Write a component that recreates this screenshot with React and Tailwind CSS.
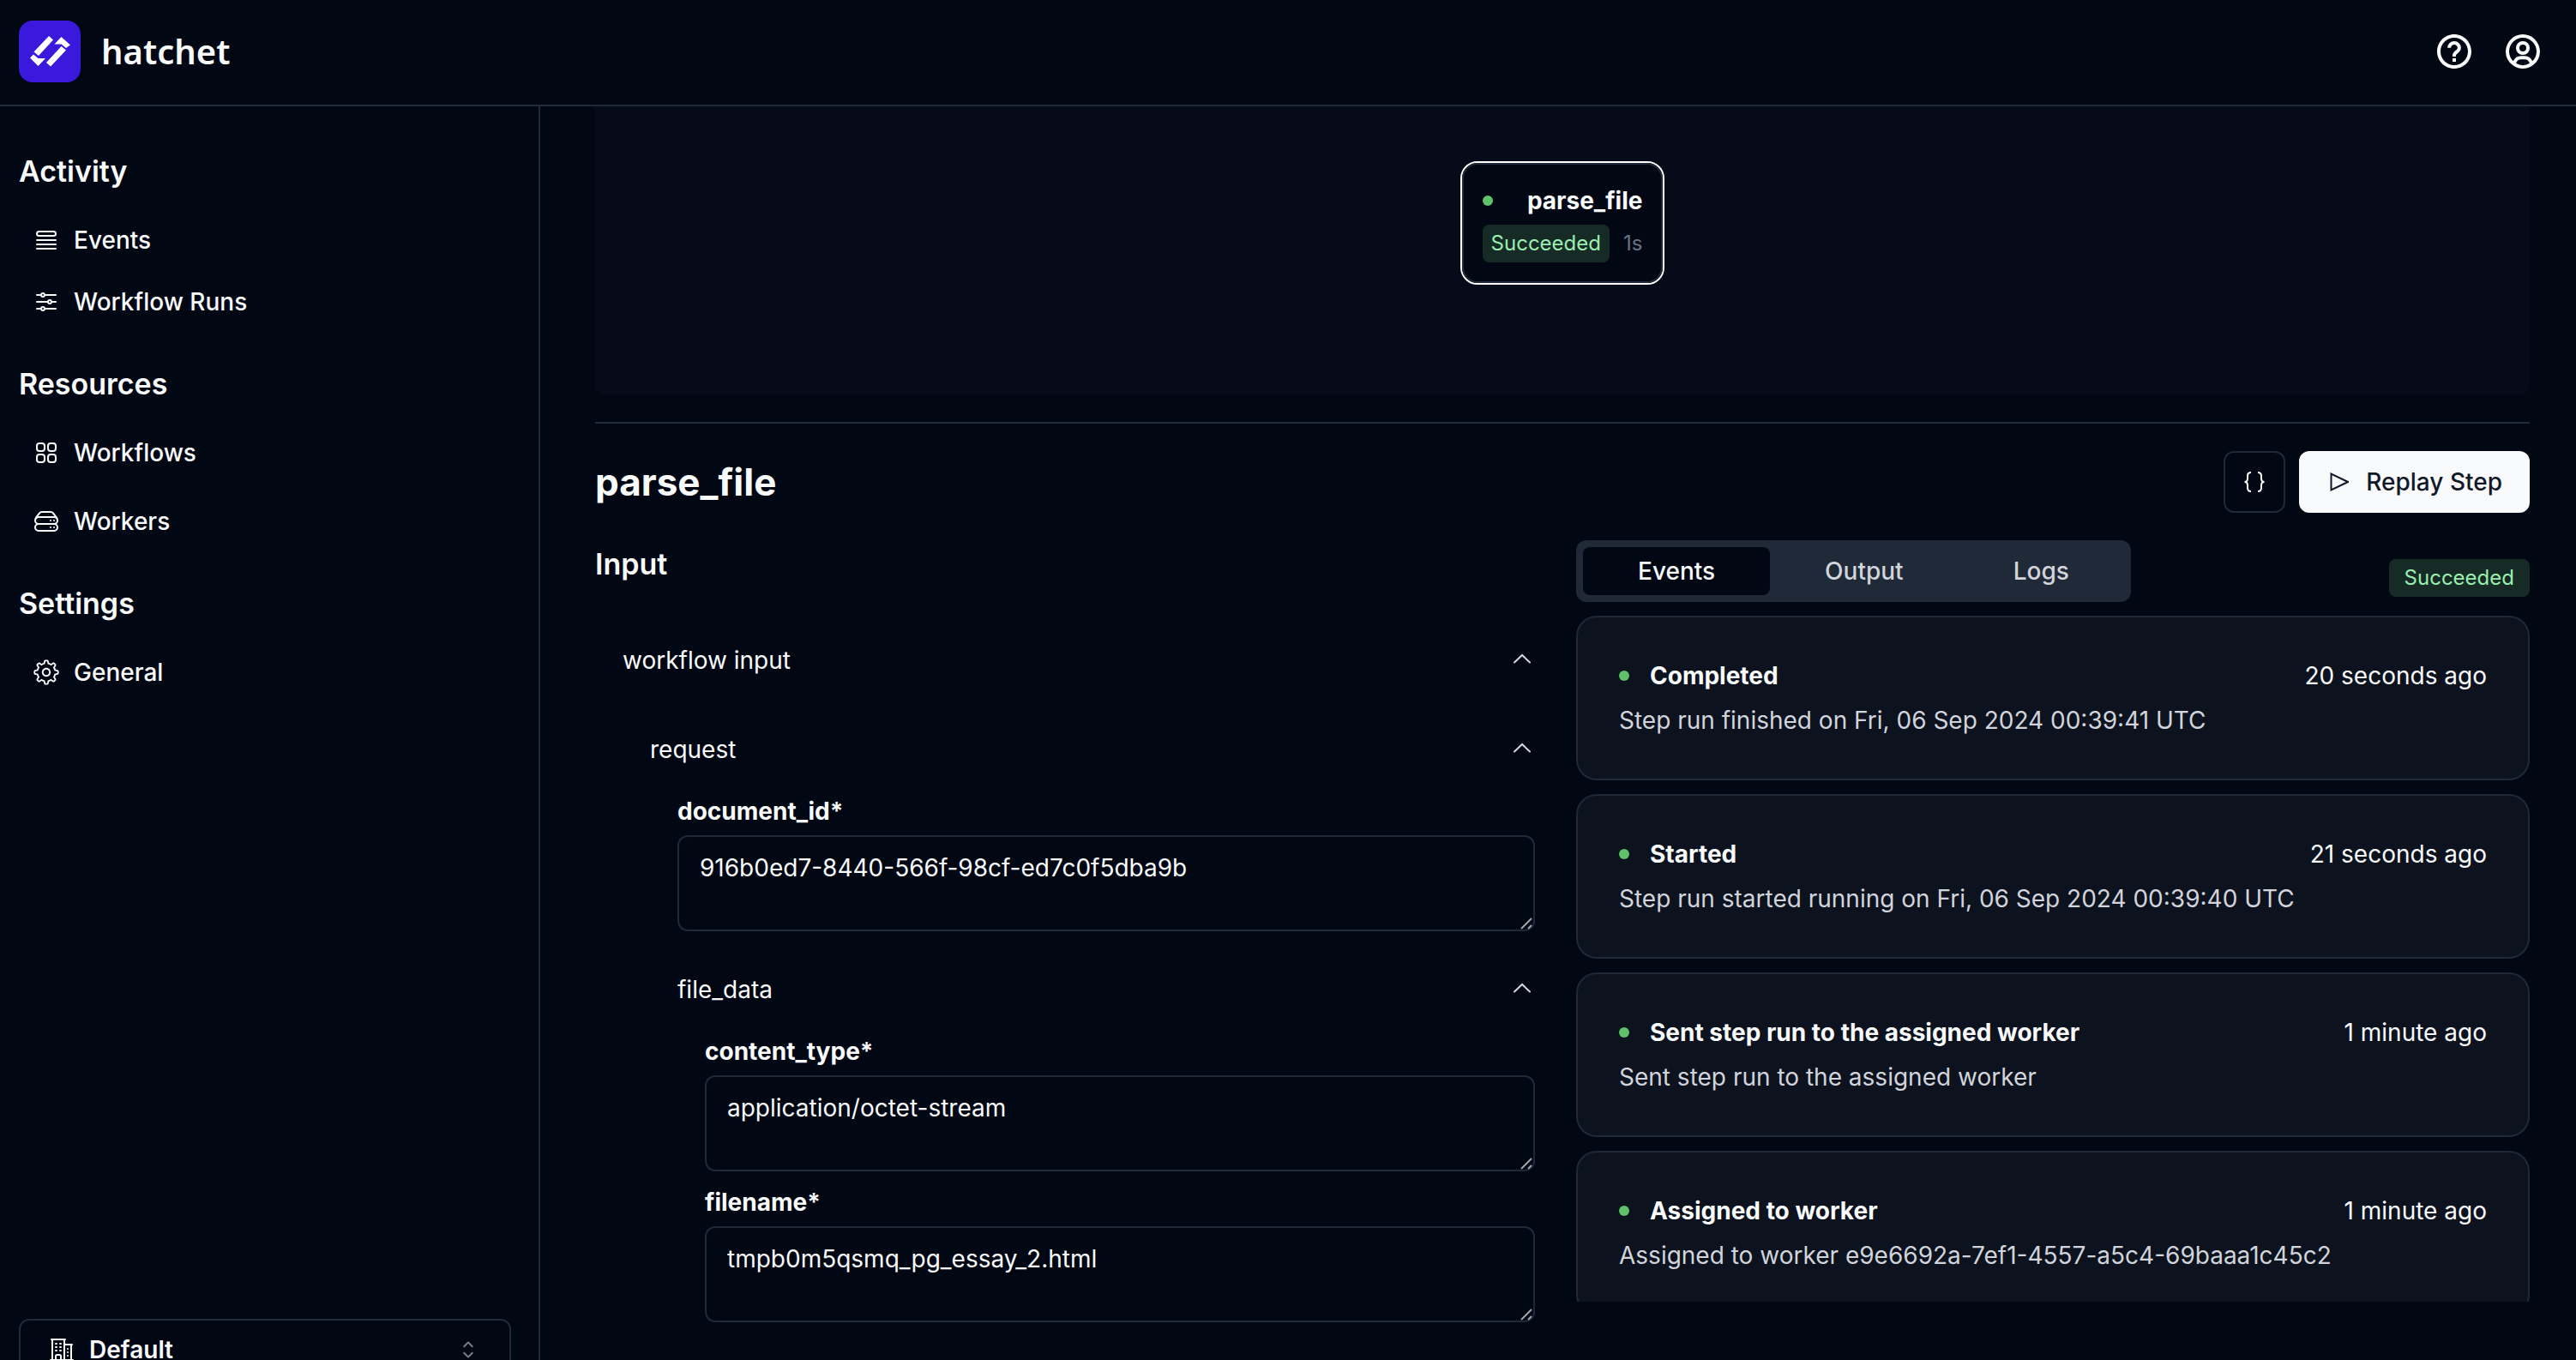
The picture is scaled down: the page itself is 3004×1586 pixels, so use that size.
import { HiOutlineQueueList, HiOutlineAdjustmentsHorizontal, HiOutlineSquares2X2, HiOutlineServerStack, HiOutlineBuildingOffice2 } from "react-icons/hi2";
import { BiHelpCircle, BiUserCircle } from "react-icons/bi";
import { RxCaretSort, RxGear } from "react-icons/rx";

const steps = [
  { title: "Completed", time: "20 seconds ago", text: "Step run finished on Fri, 06 Sep 2024 00:39:41 UTC" },
  { title: "Started", time: "21 seconds ago", text: "Step run started running on Fri, 06 Sep 2024 00:39:40 UTC" },
  { title: "Sent step run to the assigned worker", time: "1 minute ago", text: "Sent step run to the assigned worker" },
  { title: "Assigned to worker", time: "1 minute ago", text: "Assigned to worker e9e6692a-7ef1-4557-a5c4-69baaa1c45c2" },
];

function Logo() {
  return (
    <svg viewBox="0 0 72 72" className="size-[72px]" aria-hidden="true">
      <rect width="72" height="72" rx="16" fill="#3b19dc" />
      <g fill="#fff">
        <path d="M35 18l5 4.500L23 41l-5.500-4.500z" />
        <path d="M17 39.500l5.500 4.500h8.500L22.500 53 13 43.500z" />
        <path d="M37 53.500l-5-4.500L49.500 30l5.500 4.500z" />
        <path d="M55 32l-5.500-4.500H41.500L49.500 19 60 28.500z" />
      </g>
    </svg>
  );
}

function NavItem({ icon: Icon, children }) {
  return (
    <a href="#" className="flex h-[72px] items-center gap-4 px-4 text-[28px] font-medium">
      <Icon className="size-8" />
      {children}
    </a>
  );
}

function NavHeading({ children }) {
  return <h2 className="text-[34px] leading-[56px] font-semibold">{children}</h2>;
}

function Caret() {
  return (
    <svg viewBox="0 0 30 30" className="size-[30px]" fill="none" stroke="#d5d7db" strokeWidth="2" aria-hidden="true">
      <path d="M6 17.500l9-8.500 9 8.500" strokeLinecap="round" />
    </svg>
  );
}

function SectionRow({ children }) {
  return (
    <button type="button" className="flex h-[72px] w-full items-center justify-between text-left text-[28px] leading-10">
      {children}
      <Caret />
    </button>
  );
}

function Field({ id, value }) {
  return (
    <div>
      <label htmlFor={id} className="block pb-2 text-[28px] leading-10 font-bold">{id}*</label>
      <div className="relative">
        <textarea
          id={id}
          defaultValue={value}
          className="block h-[112px] w-full resize-none rounded-xl border-2 border-[#1f2937] bg-transparent px-6 py-4 text-[28px] leading-10 outline-none"
        />
        <svg viewBox="0 0 14 14" className="absolute right-[3px] bottom-[2px] size-3.5" stroke="#a3a4a6" strokeWidth="2" aria-hidden="true">
          <path d="M1 13L13 1M9 13l4-4" />
        </svg>
      </div>
    </div>
  );
}

function Badge({ className, children }) {
  return (
    <span className={"flex h-11 items-center rounded-lg bg-[#162b26] text-2xl text-[#9aeeb0] " + className}>
      {children}
    </span>
  );
}

export default function App() {
  return (
    <div className="flex h-screen flex-col overflow-hidden bg-[#020714] font-['Inter',sans-serif] text-[#f9fafb]">
      <header className="flex h-[124px] shrink-0 items-center justify-between border-b-2 border-[#1f2937] pr-[38px] pb-0.5 pl-[22px]">
        <a href="#" className="flex items-center gap-6">
          <Logo />
          <span className="font-['Noto_Sans','Open_Sans',sans-serif] text-[40px] leading-[56px] font-semibold">hatchet</span>
        </a>
        <div className="flex gap-8">
          <button type="button" aria-label="Help"><BiHelpCircle className="size-12" /></button>
          <button type="button" aria-label="Account"><BiUserCircle className="size-12" /></button>
        </div>
      </header>
      <div className="flex min-h-0 flex-1">
        <aside className="flex w-[630px] shrink-0 flex-col justify-between border-r-2 border-[#1f2937] pr-8 pl-[22px]">
          <nav className="flex flex-col gap-8 pt-12">
            <section>
              <NavHeading>Activity</NavHeading>
              <div className="pt-4">
                <NavItem icon={HiOutlineQueueList}>Events</NavItem>
                <NavItem icon={HiOutlineAdjustmentsHorizontal}>Workflow Runs</NavItem>
              </div>
            </section>
            <section>
              <NavHeading>Resources</NavHeading>
              <div className="flex flex-col gap-2 pt-4">
                <NavItem icon={HiOutlineSquares2X2}>Workflows</NavItem>
                <NavItem icon={HiOutlineServerStack}>Workers</NavItem>
              </div>
            </section>
            <section>
              <NavHeading>Settings</NavHeading>
              <div className="pt-4">
                <NavItem icon={RxGear}>General</NavItem>
              </div>
            </section>
          </nav>
          <div className="h-12 shrink-0">
            <button type="button" className="flex h-[72px] w-full items-center justify-between rounded-xl border-2 border-[#1f2937] px-8 text-[28px] leading-6 font-semibold">
              <span className="flex items-center gap-4"><HiOutlineBuildingOffice2 className="size-8" />Default</span>
              <RxCaretSort className="size-8 opacity-50" />
            </button>
          </div>
        </aside>
        <main className="min-w-0 flex-1 overflow-hidden pr-[54px] pl-16">
          <div className="flex h-[336px] justify-center rounded-b-xl bg-[#060b1a] pt-16">
            <div className="h-[144px] rounded-[20px] border-2 border-white">
              <div className="flex h-full flex-col justify-center gap-2 rounded-[18px] border-2 border-[#1f2937] bg-[#020714] px-[22px]">
                <div className="flex items-center justify-between">
                  <span className="size-3 rounded-full bg-[#5fc268]" />
                  <span className="text-[28px] leading-10 font-bold">parse_file</span>
                </div>
                <div className="flex items-center gap-4">
                  <Badge className="px-[10px]">Succeeded</Badge>
                  <span className="text-2xl text-gray-500">1s</span>
                </div>
              </div>
            </div>
          </div>
          <div className="mt-8 h-0.5 bg-[#1f2937]" />
          <div className="flex h-[136px] items-center justify-between">
            <h1 className="text-[44px] font-bold">parse_file</h1>
            <div className="flex gap-4">
              <button type="button" aria-label="View JSON" className="flex size-[72px] items-center justify-center rounded-xl border-2 border-[#1f2937]">
                <svg viewBox="0 0 26 26" className="size-[26px]" fill="none" stroke="currentColor" strokeWidth="2" aria-hidden="true">
                  <path d="M9 2C6 2 5 3 5 6v3c0 2.500-1 4-3.500 4 2.500 0 3.500 1.500 3.500 4v3c0 3 1 4 4 4M17 2c3 0 4 1 4 4v3c0 2.500 1 4 3.500 4-2.500 0-3.500 1.500-3.500 4v3c0 3-1 4-4 4" />
                </svg>
              </button>
              <button type="button" className="flex h-[72px] items-center gap-5 rounded-xl bg-[#f9fafb] pr-8 pl-9 text-[28px] font-medium text-[#111827]">
                <svg viewBox="0 0 22 24" className="h-6 w-[22px]" fill="none" stroke="currentColor" strokeWidth="2" aria-hidden="true">
                  <path d="M1.500 2.500v19l19.500-9.500z" />
                </svg>
                Replay Step
              </button>
            </div>
          </div>
          <div className="grid grid-cols-2 gap-8">
            <div className="pr-4">
              <h2 className="text-[34px] leading-[56px] font-semibold">Input</h2>
              <div className="pt-12 pl-8">
                <SectionRow>workflow input</SectionRow>
                <div className="pt-8 pl-8">
                  <SectionRow>request</SectionRow>
                  <div className="pt-4 pl-8">
                    <Field id="document_id" value="916b0ed7-8440-566f-98cf-ed7c0f5dba9b" />
                    <div className="pt-8">
                      <SectionRow>file_data</SectionRow>
                    </div>
                    <div className="flex flex-col gap-4 pt-4 pl-8">
                      <Field id="content_type" value="application/octet-stream" />
                      <Field id="filename" value="tmpb0m5qsmq_pg_essay_2.html" />
                    </div>
                  </div>
                </div>
              </div>
            </div>
            <div className="h-[888px] overflow-hidden">
              <div className="flex items-end justify-between">
                <div role="tablist" className="flex h-[72px] rounded-xl bg-[#1f2937] p-2 text-[28px] font-medium">
                  <button type="button" role="tab" aria-selected="true" className="rounded-lg bg-[#020714] px-16">Events</button>
                  <button type="button" role="tab" aria-selected="false" className="px-16 text-[#d1d5db]">Output</button>
                  <button type="button" role="tab" aria-selected="false" className="px-16 text-[#d1d5db]">Logs</button>
                </div>
                <Badge className="mb-1.5 px-[18px]">Succeeded</Badge>
              </div>
              <div className="flex flex-col gap-4 pt-4">
                {steps.map((s) => (
                  <article key={s.title} className="h-48 rounded-3xl border-2 border-[#1f2937] bg-[#0c121e] px-12 pt-12 text-[28px] leading-10">
                    <div className="flex items-center justify-between">
                      <h3 className="flex items-center gap-6 font-bold">
                        <span className="size-3 rounded-full bg-[#5fc268]" />
                        {s.title}
                      </h3>
                      <span>{s.time}</span>
                    </div>
                    <p className="pt-3 text-[#d1d5db]">{s.text}</p>
                  </article>
                ))}
              </div>
            </div>
          </div>
        </main>
      </div>
    </div>
  );
}
